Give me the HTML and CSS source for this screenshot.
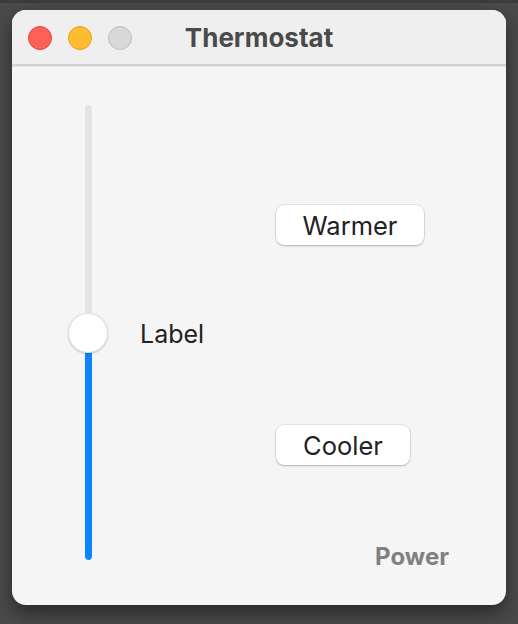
FILE: index.html
```html
<!DOCTYPE html>
<html lang="en">
<head>
<meta charset="utf-8">
<title>Thermostat</title>
<link rel="stylesheet" href="styles.css">
</head>
<body>
<div class="window">
  <div class="titlebar">
    <div class="lights">
      <span class="light red"></span>
      <span class="light yellow"></span>
      <span class="light gray"></span>
    </div>
    <div class="title">Thermostat</div>
  </div>
  <div class="content">
    <div class="slider">
      <div class="track"><div class="fill"></div></div>
      <div class="knob"></div>
    </div>
    <div class="label">Label</div>
    <div class="actions">
      <button class="btn warmer">Warmer</button>
      <button class="btn cooler">Cooler</button>
      <div class="power">Power</div>
    </div>
  </div>
</div>
</body>
</html>
```
FILE: styles.css
```css
html, body {
  margin: 0;
  padding: 0;
}
body {
  width: 518px;
  height: 624px;
  overflow: hidden;
  background: #4a4a4a;
  border-top: 3px solid #3c3c3c;
  box-sizing: border-box;
  font-family: Inter, "Liberation Sans", sans-serif;
  padding: 7px 12px 0 12px;
}
.window {
  width: 494px;
  height: 595px;
  border-radius: 14px;
  background: #f5f5f5;
  box-shadow: 0 8px 18px rgba(0,0,0,0.45);
  overflow: hidden;
  display: flex;
  flex-direction: column;
}
.titlebar {
  height: 54px;
  flex: none;
  background: #efefef;
  border-bottom: 2px solid #d1d1d1;
  box-shadow: 0 1px 0 #e3e3e3;
  position: relative;
  display: flex;
  align-items: center;
  justify-content: center;
}
.lights {
  position: absolute;
  left: 16px;
  top: 16px;
  display: flex;
  gap: 16px;
}
.light {
  width: 22px;
  height: 22px;
  border-radius: 50%;
  display: block;
}
.red { background: #fe5f57; border: 1px solid #e0453f; }
.yellow { background: #febc2e; border: 1px solid #dfa126; }
.gray { background: #d8d8d8; border: 1px solid #bfbfbf; }
.title {
  font-weight: 700;
  font-size: 26px;
  color: #4a4a4a;
  margin-top: 0;
}
.content {
  flex: 1;
  display: flex;
  align-items: flex-start;
  padding: 39px 0 0 56px;
}
.slider {
  width: 40px;
  height: 455px;
  position: relative;
  display: flex;
  justify-content: center;
  flex: none;
}
.track {
  width: 7px;
  height: 100%;
  background: #e4e4e4;
  border-radius: 4px;
  display: flex;
  flex-direction: column;
  justify-content: flex-end;
  overflow: hidden;
}
.fill {
  height: 227px;
  background: #0b84fe;
  border-radius: 0 0 4px 4px;
}
.knob {
  position: absolute;
  left: 0;
  top: 208px;
  width: 38px;
  height: 38px;
  border-radius: 50%;
  background: #ffffff;
  border: 1px solid rgba(0,0,0,0.12);
  box-shadow: 0 1px 2px rgba(0,0,0,0.18);
}
.label {
  width: 168px;
  box-sizing: border-box;
  padding-left: 32px;
  margin-top: 214px;
  font-size: 25px;
  line-height: 30px;
  color: #222222;
  flex: none;
}
.actions {
  width: 173px;
  display: flex;
  flex-direction: column;
  align-items: flex-start;
  flex: none;
}
.btn {
  height: 40px;
  border: none;
  border-radius: 8px;
  background: #ffffff;
  box-shadow: 0 0 0 0.5px rgba(0,0,0,0.14), 0 1px 2px rgba(0,0,0,0.22);
  font-family: Inter, "Liberation Sans", sans-serif;
  font-size: 25.5px;
  color: #222222;
  padding: 0;
  display: flex;
  align-items: center;
  justify-content: center;
}
.warmer {
  width: 148px;
  margin-top: 100px;
}
.cooler {
  width: 134px;
  margin-top: 180px;
}
.power {
  align-self: flex-end;
  margin-top: 78px;
  font-size: 24px;
  font-weight: 700;
  line-height: 28px;
  color: #808080;
}
```
